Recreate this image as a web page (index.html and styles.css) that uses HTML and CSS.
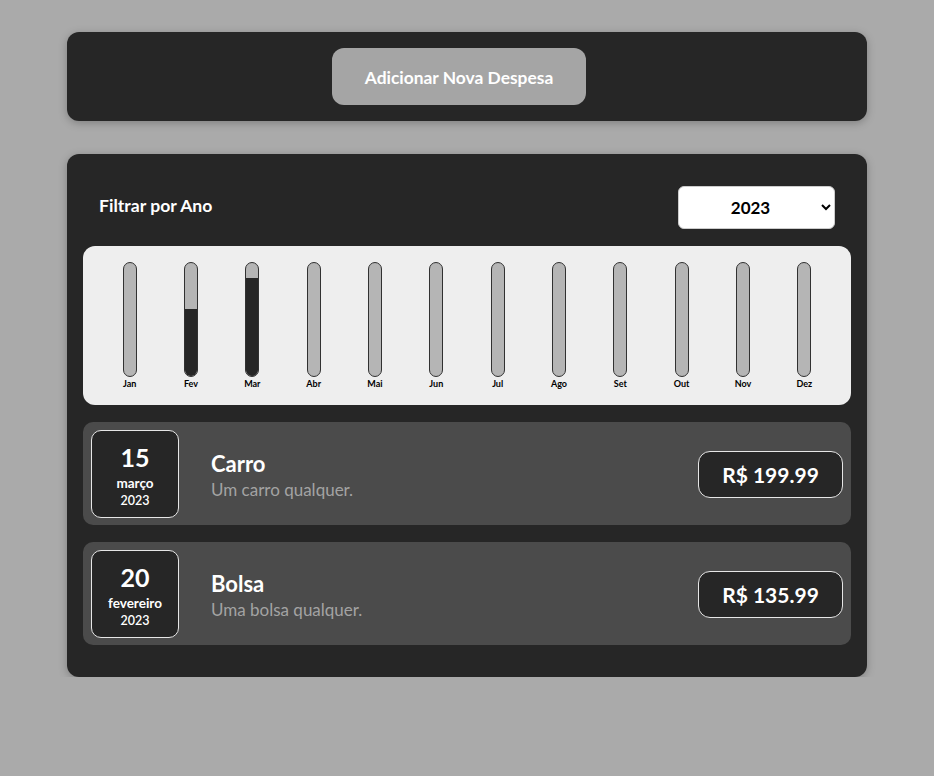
FILE: index.html
```html
<!DOCTYPE html>
<html lang="pt-BR">
<head>
<meta charset="utf-8">
<title>Despesas</title>
<link rel="stylesheet" href="styles.css">
</head>
<body>
<div class="app">
  <section class="new-expense">
    <button class="add-btn" type="button">Adicionar Nova Despesa</button>
  </section>

  <section class="expenses">
    <div class="filter">
      <label class="filter-label" for="year">Filtrar por Ano</label>
      <select id="year" class="filter-select">
        <option>2023</option>
        <option>2022</option>
        <option>2021</option>
      </select>
    </div>

    <div class="chart">
      <div class="bar"><div class="bar-inner"><div class="bar-fill" style="height:0%"></div></div><div class="bar-label">Jan</div></div>
      <div class="bar"><div class="bar-inner"><div class="bar-fill" style="height:59%"></div></div><div class="bar-label">Fev</div></div>
      <div class="bar"><div class="bar-inner"><div class="bar-fill" style="height:87%"></div></div><div class="bar-label">Mar</div></div>
      <div class="bar"><div class="bar-inner"><div class="bar-fill" style="height:0%"></div></div><div class="bar-label">Abr</div></div>
      <div class="bar"><div class="bar-inner"><div class="bar-fill" style="height:0%"></div></div><div class="bar-label">Mai</div></div>
      <div class="bar"><div class="bar-inner"><div class="bar-fill" style="height:0%"></div></div><div class="bar-label">Jun</div></div>
      <div class="bar"><div class="bar-inner"><div class="bar-fill" style="height:0%"></div></div><div class="bar-label">Jul</div></div>
      <div class="bar"><div class="bar-inner"><div class="bar-fill" style="height:0%"></div></div><div class="bar-label">Ago</div></div>
      <div class="bar"><div class="bar-inner"><div class="bar-fill" style="height:0%"></div></div><div class="bar-label">Set</div></div>
      <div class="bar"><div class="bar-inner"><div class="bar-fill" style="height:0%"></div></div><div class="bar-label">Out</div></div>
      <div class="bar"><div class="bar-inner"><div class="bar-fill" style="height:0%"></div></div><div class="bar-label">Nov</div></div>
      <div class="bar"><div class="bar-inner"><div class="bar-fill" style="height:0%"></div></div><div class="bar-label">Dez</div></div>
    </div>

    <ul class="list">
      <li class="item">
        <div class="date">
          <div class="date-day">15</div>
          <div class="date-month">março</div>
          <div class="date-year">2023</div>
        </div>
        <div class="desc">
          <h2 class="desc-title">Carro</h2>
          <p class="desc-text">Um carro qualquer.</p>
        </div>
        <div class="price">R$ 199.99</div>
      </li>
      <li class="item">
        <div class="date">
          <div class="date-day">20</div>
          <div class="date-month">fevereiro</div>
          <div class="date-year">2023</div>
        </div>
        <div class="desc">
          <h2 class="desc-title">Bolsa</h2>
          <p class="desc-text">Uma bolsa qualquer.</p>
        </div>
        <div class="price">R$ 135.99</div>
      </li>
    </ul>
  </section>
</div>
</body>
</html>
```

FILE: styles.css
```css
* { box-sizing: border-box; }

html, body {
  margin: 0;
  padding: 0;
}

body {
  background: #aaaaaa;
  font-family: Lato, "Open Sans", "Noto Sans", sans-serif;
  color: #ffffff;
}

.app {
  width: 800px;
  margin: 32px auto 0;
  display: flex;
  flex-direction: column;
  gap: 33px;
}

.new-expense {
  background: #262626;
  border-radius: 12px;
  padding: 16px;
  height: 89px;
  display: flex;
  justify-content: center;
  box-shadow: 0 2px 8px rgba(0, 0, 0, 0.25);
}

.add-btn {
  width: 254px;
  height: 57px;
  margin-right: 16px;
  border: none;
  border-radius: 12px;
  background: #a5a5a5;
  color: #ffffff;
  font-family: inherit;
  font-weight: 700;
  font-size: 17.4px;
  padding-top: 2px;
  cursor: pointer;
}

.expenses {
  background: #262626;
  border-radius: 12px;
  padding: 16px 16px 32px;
  box-shadow: 0 2px 8px rgba(0, 0, 0, 0.25);
}

.filter {
  display: flex;
  justify-content: space-between;
  align-items: center;
  padding: 16px 16px 17px 16px;
}

.filter-label {
  font-weight: 700;
  font-size: 17.6px;
  margin-top: -4px;
}

.filter-select {
  width: 157px;
  height: 43px;
  border: 1px solid #cccccc;
  border-radius: 6px;
  background: #ffffff;
  color: #000000;
  font-family: inherit;
  font-weight: 700;
  font-size: 17px;
  text-align: center;
  text-align-last: center;
  padding: 0 6px;
}

.chart {
  background: #eeeeee;
  border-radius: 12px;
  padding: 16px;
  display: grid;
  grid-template-columns: repeat(12, 1fr);
  height: 159px;
}

.bar {
  display: flex;
  flex-direction: column;
  align-items: center;
  height: 100%;
}

.bar-inner {
  flex: 1;
  width: 14px;
  border: 1px solid #313131;
  border-radius: 8px;
  background: #b5b5b5;
  overflow: hidden;
  display: flex;
  flex-direction: column;
  justify-content: flex-end;
}

.bar-fill {
  background: #262626;
  width: 100%;
}

.bar-label {
  font-family: Lato, sans-serif;
  font-weight: 700;
  font-size: 9px;
  line-height: 11px;
  padding-top: 1px;
  color: #000000;
}

.list {
  list-style: none;
  margin: 17px 0 0;
  padding: 0;
  display: flex;
  flex-direction: column;
  gap: 17px;
}

.item {
  background: #4b4b4b;
  border-radius: 10px;
  padding: 8px;
  display: flex;
  align-items: center;
  height: 103px;
}

.date {
  width: 88px;
  height: 88px;
  background: #262626;
  border: 1px solid #e6e6e6;
  border-radius: 10px;
  display: flex;
  flex-direction: column;
  align-items: center;
  justify-content: center;
  font-weight: 700;
  padding-top: 3px;
}

.date-day {
  font-size: 25px;
  line-height: 30px;
}

.date-month {
  font-size: 13.5px;
  line-height: 18px;
  margin-top: 2px;
}

.date-year {
  font-size: 12.5px;
  line-height: 16px;
  margin-top: 1px;
  font-weight: 600;
}

.desc {
  flex: 1;
  margin-left: 32px;
  padding-top: 4px;
}

.desc-title {
  margin: 0;
  font-size: 22px;
  line-height: 26px;
  font-weight: 700;
  color: #ffffff;
}

.desc-text {
  margin: 2px 0 0;
  font-size: 17px;
  line-height: 22px;
  color: #a3a3a3;
}

.price {
  width: 145px;
  height: 47px;
  margin-top: 2px;
  background: #262626;
  border: 1px solid #e6e6e6;
  border-radius: 12px;
  display: flex;
  align-items: center;
  justify-content: center;
  font-size: 21px;
  font-weight: 700;
}
```
